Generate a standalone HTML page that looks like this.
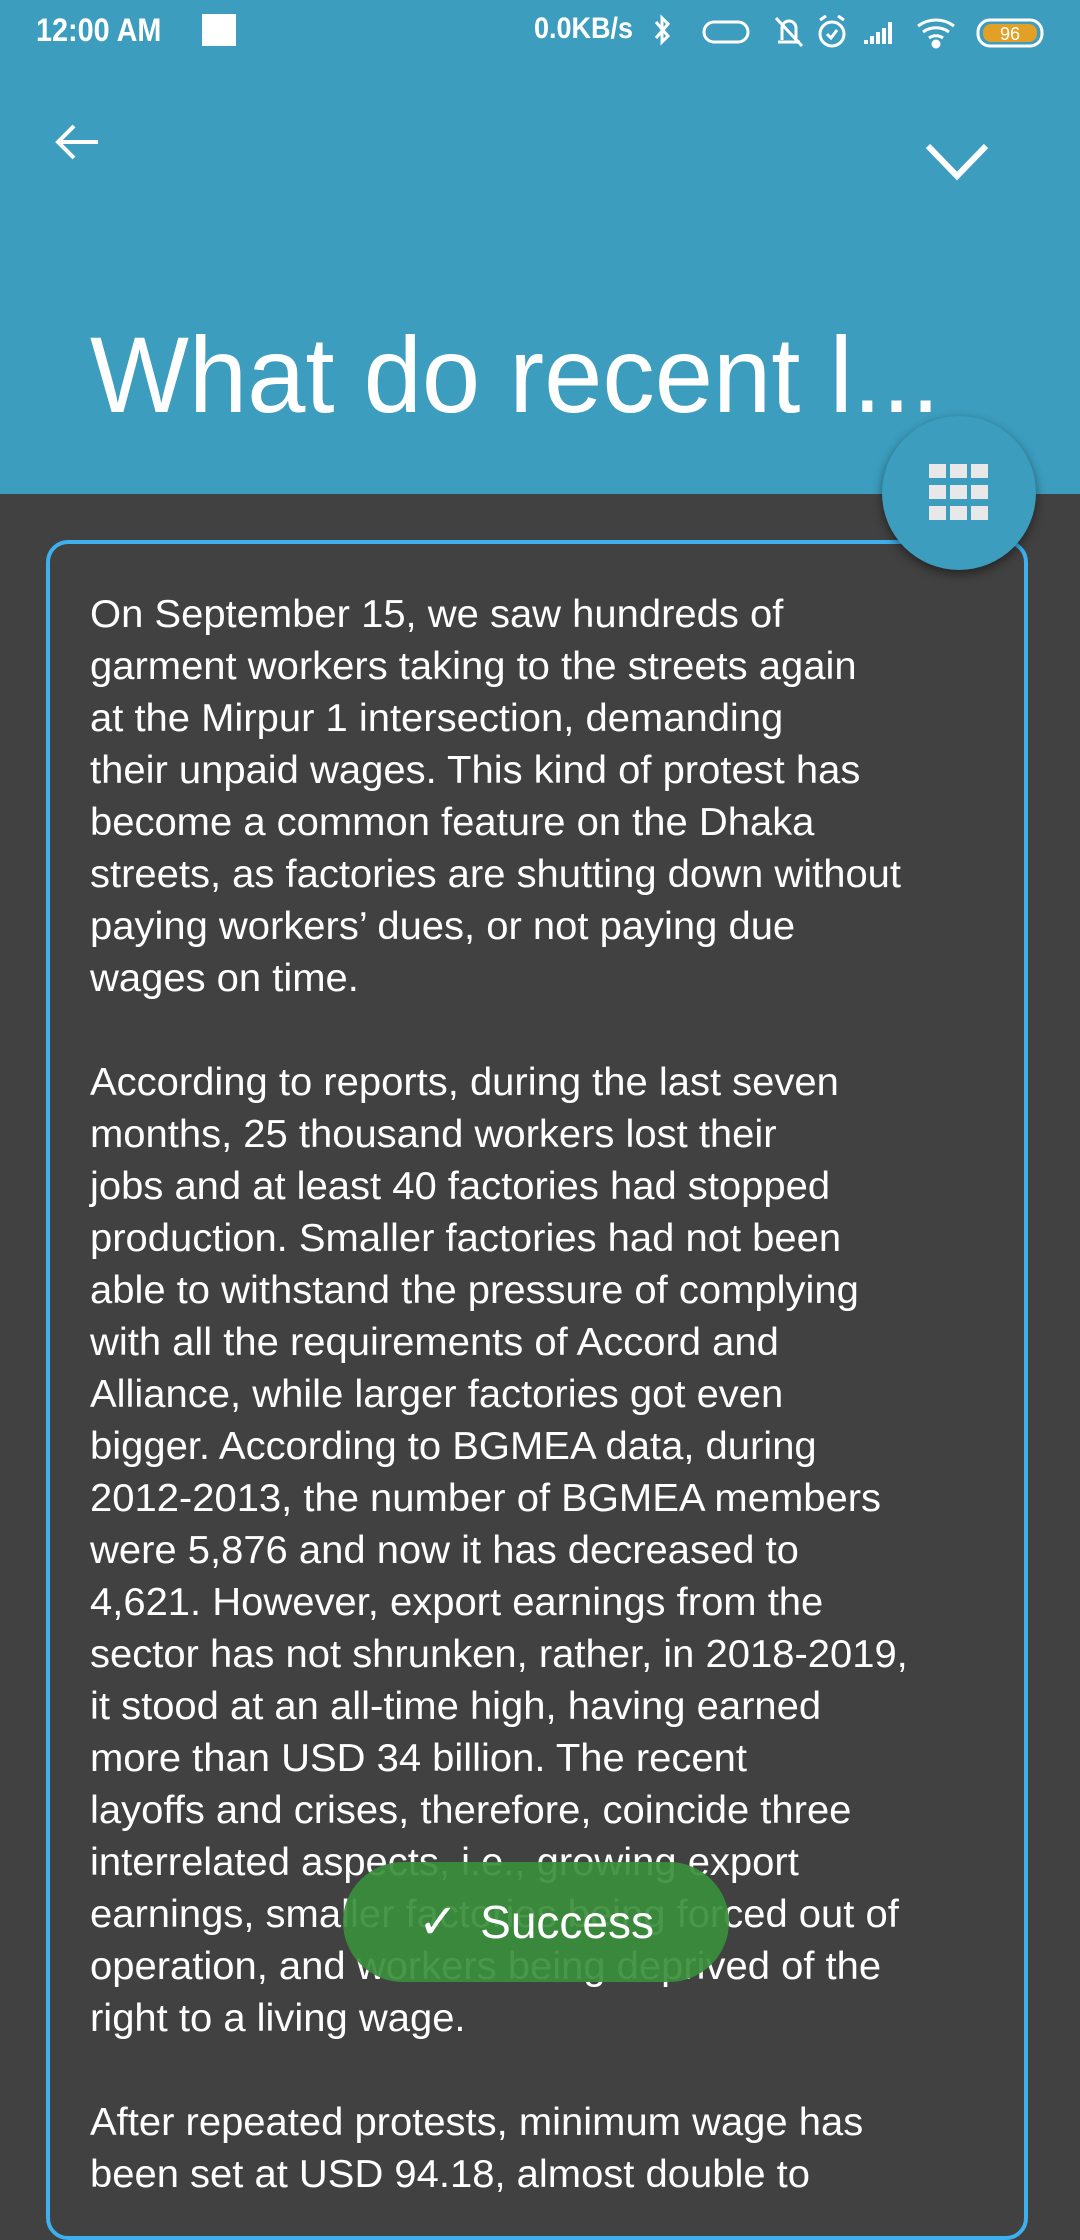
<!DOCTYPE html>
<html><head><meta charset="utf-8"><style>
body{margin:0;width:1080px;height:2160px;overflow:hidden;background:#414141;font-family:"Liberation Sans",sans-serif;position:relative}
.hdr{position:absolute;left:0;top:0;width:1080px;height:494px;background:#3C9DBE}
.sb{position:absolute;top:12px;color:#fff;font-size:32px;font-weight:bold;transform:scaleX(.9);transform-origin:left}
.title{position:absolute;left:90px;top:312px;color:#fff;font-size:108px;white-space:nowrap;transform:scaleX(.97);transform-origin:left}
.card{position:absolute;left:46px;top:540px;width:982px;height:1700px;border:4px solid #3EB0EE;border-radius:22px;box-sizing:border-box}
.txt{position:absolute;left:90px;top:589px;color:#fff;font-size:39px;line-height:52px;white-space:pre;transform:scaleX(1.025);transform-origin:left}
.fab{position:absolute;left:882px;top:416px;width:154px;height:154px;border-radius:50%;background:#3C9DBE;box-shadow:0 4px 10px rgba(0,0,0,.45)}
.toast{position:absolute;left:343px;top:1862px;width:386px;height:120px;border-radius:60px;background:rgba(56,142,60,.92);color:#fff;font-size:46px;display:flex;align-items:center;justify-content:center}
</style></head><body>
<div class="hdr"></div>
<div class="sb" style="left:36px">12:00 AM</div>
<div style="position:absolute;left:202px;top:14px;width:34px;height:32px;background:#fff"></div>
<div class="sb" style="left:534px;font-size:30px">0.0KB/s</div>
<svg style="position:absolute;left:650px;top:12px" width="400" height="40" viewBox="0 0 400 40" fill="none" stroke="#fff" stroke-width="3">
<path d="M6 10l12 14-6 6V6l6 6-12 14"/>
<rect x="54" y="10" width="44" height="20" rx="10"/>
<path d="M128 30h22M132 28V16a7 7 0 0114 0v12M126 6l26 28"/>
<circle cx="182" cy="22" r="12"/><path d="M177 22l4 4 6-8M170 8l6-4M194 8l-6-4"/>
<path d="M216 32v-4M222 32v-8M228 32v-12M234 32v-16M240 32v-22" stroke-width="4"/>
<path d="M268 14a30 30 0 0136 0M273 20a22 22 0 0126 0M279 26a12 12 0 0114 0"/><circle cx="286" cy="32" r="3" fill="#fff"/>
<rect x="328" y="8" width="64" height="26" rx="12"/><rect x="333" y="12" width="54" height="18" rx="8" fill="#E3A027" stroke="none"/>
<text x="360" y="28" font-size="18" fill="#fff" stroke="none" text-anchor="middle" font-family="Liberation Sans">96</text>
</svg>
<svg style="position:absolute;left:52px;top:120px" width="50" height="50" viewBox="0 0 50 50" fill="none" stroke="#fff" stroke-width="4"><path d="M46 22H6M22 6L6 22l16 16"/></svg>
<svg style="position:absolute;left:924px;top:138px" width="66" height="46" viewBox="0 0 66 46" fill="none" stroke="#fff" stroke-width="6"><path d="M4 8l29 30 29-30"/></svg>
<div class="title">What do recent l...</div>
<div class="card"></div>
<div class="txt">On September 15, we saw hundreds of
garment workers taking to the streets again
at the Mirpur 1 intersection, demanding
their unpaid wages. This kind of protest has
become a common feature on the Dhaka
streets, as factories are shutting down without
paying workers’ dues, or not paying due
wages on time.

According to reports, during the last seven
months, 25 thousand workers lost their
jobs and at least 40 factories had stopped
production. Smaller factories had not been
able to withstand the pressure of complying
with all the requirements of Accord and
Alliance, while larger factories got even
bigger. According to BGMEA data, during
2012-2013, the number of BGMEA members
were 5,876 and now it has decreased to
4,621. However, export earnings from the
sector has not shrunken, rather, in 2018-2019,
it stood at an all-time high, having earned
more than USD 34 billion. The recent
layoffs and crises, therefore, coincide three
interrelated aspects, i.e., growing export
earnings, smaller factories being forced out of
operation, and workers being deprived of the
right to a living wage.

After repeated protests, minimum wage has
been set at USD 94.18, almost double to</div>
<div class="fab"><svg style="position:absolute;left:45px;top:45px" width="64" height="64" viewBox="0 0 64 64" fill="#e8e8e8"><rect x="2" y="3" width="17" height="14"/><rect x="23" y="3" width="17" height="14"/><rect x="44" y="3" width="17" height="14"/><rect x="2" y="24" width="17" height="14"/><rect x="23" y="24" width="17" height="14"/><rect x="44" y="24" width="17" height="14"/><rect x="2" y="45" width="17" height="14"/><rect x="23" y="45" width="17" height="14"/><rect x="44" y="45" width="17" height="14"/></svg></div>
<div class="toast"><span style="font-size:48px;margin-right:22px">✓</span><span style="display:inline-block">Success</span></div>
</body></html>
